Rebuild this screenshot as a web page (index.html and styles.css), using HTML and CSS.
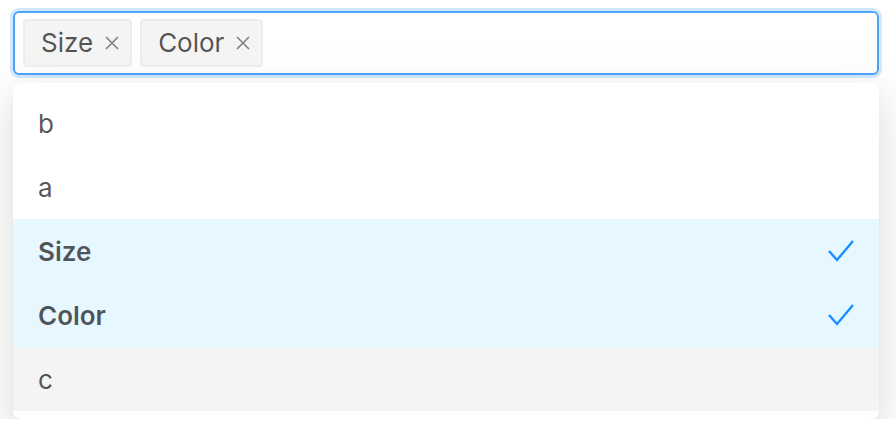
FILE: index.html
```html
<!DOCTYPE html>
<html>
<head>
<meta charset="utf-8">
<link rel="stylesheet" href="styles.css">
</head>
<body>
<div class="wrap">
  <div class="select">
    <span class="tag">Size<svg class="close" viewBox="0 0 14 14"><path d="M1 1 L13 13 M13 1 L1 13" stroke="#808080" stroke-width="1.6" fill="none"/></svg></span>
    <span class="tag">Color<svg class="close" viewBox="0 0 14 14"><path d="M1 1 L13 13 M13 1 L1 13" stroke="#808080" stroke-width="1.6" fill="none"/></svg></span>
  </div>
  <div class="dropdown">
    <div class="item">b</div>
    <div class="item">a</div>
    <div class="item selected">Size<svg class="check" viewBox="0 0 28 24"><path d="M2 12 L10 21 L26 2" fill="none" stroke="#1890ff" stroke-width="2.4"/></svg></div>
    <div class="item selected">Color<svg class="check" viewBox="0 0 28 24"><path d="M2 12 L10 21 L26 2" fill="none" stroke="#1890ff" stroke-width="2.4"/></svg></div>
    <div class="item active">c</div>
  </div>
</div>
</body>
</html>
```
FILE: styles.css
```css
html, body { margin: 0; padding: 0; background: #fff; }
body {
  font-family: Inter, "Noto Sans", sans-serif;
  font-size: 26px;
  color: rgba(0,0,0,0.67);
}
.wrap {
  padding: 11px 0 0 13px;
  width: 866px;
}
.select {
  box-sizing: border-box;
  height: 64px;
  border: 2px solid #4fa3fb;
  border-radius: 6px;
  box-shadow: 0 0 0 3px rgba(24,144,255,0.2);
  padding: 6px 8px;
  display: flex;
  gap: 8px;
  align-items: flex-start;
}
.tag {
  box-sizing: border-box;
  height: 48px;
  display: flex;
  align-items: center;
  background: #f4f4f4;
  border: 2px solid #ececec;
  border-radius: 4px;
  padding: 0 11px 0 16px;
  line-height: 44px;
}
.close {
  width: 14px;
  height: 14px;
  margin-left: 12px;
}
.dropdown {
  margin-top: 8px;
  width: 866px;
  background: #fff;
  border-radius: 8px;
  padding: 8px 0;
  box-shadow: 0 6px 12px -8px rgba(0,0,0,0.12), 0 12px 32px 0 rgba(0,0,0,0.08), 0 18px 56px 16px rgba(0,0,0,0.05);
}
.item {
  height: 64px;
  display: flex;
  align-items: center;
  justify-content: space-between;
  padding: 0 24px 0 25px;
}
.selected {
  background: #e6f7ff;
  font-weight: 600;
}
.active { background: #f4f4f4; }
.check { width: 28px; height: 24px; }
```
